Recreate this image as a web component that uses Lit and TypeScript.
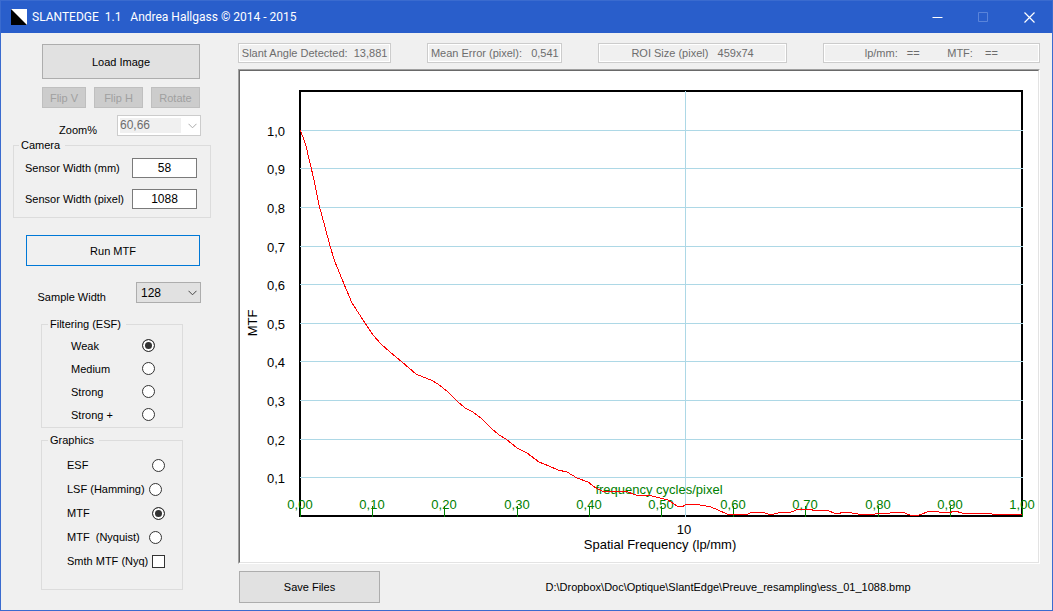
import { LitElement, html, svg, css } from "lit";
import { customElement, state } from "lit/decorators.js";

/* Plot geometry, in the chart's own units. */
const LEFT = 60;
const RIGHT = 782;
const TOP = 20;
const BOTTOM = 445;
const UNIT = 386;

const CURVE: [number, number][] = [
  [60, 59], [63, 66], [66, 75], [70, 92], [74, 109], [79, 134], [85, 156], [90, 175], [95, 191],
  [104, 213], [112, 232], [125, 252], [133, 264], [141, 273], [150, 281], [162, 291], [176, 303],
  [183, 306], [191, 309], [198, 313], [208, 321], [217, 330], [225, 337], [233, 341], [242, 348],
  [251, 357], [259, 364], [266, 368], [277, 377], [287, 382], [299, 391], [309, 395], [318, 399],
  [327, 401], [337, 407], [348, 411], [356, 417], [362, 420], [385, 420], [396, 424], [412, 425],
  [428, 429], [437, 435], [442, 436], [447, 433], [455, 433], [471, 436], [478, 439], [487, 443],
  [500, 443], [505, 444], [513, 441], [522, 441], [531, 444], [541, 441], [551, 441], [559, 438],
  [568, 438], [577, 440], [582, 439], [587, 439], [596, 443], [605, 441], [618, 443], [632, 444],
  [638, 442], [643, 443], [657, 441], [662, 441], [670, 444], [679, 444], [690, 440], [708, 442],
  [715, 440], [722, 442], [748, 442], [752, 443], [764, 443], [768, 444], [773, 443], [782, 443],
];

const comma = (n: number, digits: number) => n.toFixed(digits).replace(".", ",");

@customElement("mtf-chart")
export class MtfChart extends LitElement {
  static styles = css`
    :host {
      display: block;
      background: #fff;
      border: 1px solid;
      border-color: #a0a0a0 #fff #fff #a0a0a0;
    }
    .inner {
      border: 1px solid;
      border-color: #696969 #e3e3e3 #e3e3e3 #696969;
    }
    svg {
      display: block;
      width: 100%;
      height: auto;
      font-family: "Liberation Sans", Arial, sans-serif;
      font-size: 13px;
    }
    .grid { stroke: #add8e6; shape-rendering: crispEdges; }
    .frame { fill: none; stroke: #000; stroke-width: 2; shape-rendering: crispEdges; }
    .tick { stroke: #008000; shape-rendering: crispEdges; }
    .curve { fill: none; stroke: #f00; shape-rendering: crispEdges; }
    .value { text-anchor: end; }
    .mid { text-anchor: middle; }
    .green { fill: #008000; }
  `;

  render() {
    const levels = [1, 0.9, 0.8, 0.7, 0.6, 0.5, 0.4, 0.3, 0.2, 0.1];
    const ticks = Array.from({ length: 11 }, (_, i) => i / 10);
    const width = RIGHT - LEFT;
    const tenLp = Math.round(LEFT + (width * 10 * 58) / 1088) + 0.5;
    return html`<div class="inner">
      <svg viewBox="0 0 798 491" role="img" aria-label="MTF">
        <rect class="frame" x=${LEFT} y=${TOP} width=${width} height=${BOTTOM - TOP}></rect>
        ${levels.map((v) => {
          const y = Math.round(BOTTOM - 0.2 - v * UNIT);
          return svg`<line class="grid" x1=${LEFT} x2=${RIGHT + 1} y1=${y + 0.5} y2=${y + 0.5}></line>
            <text class="value" x="45" y=${y + 6}>${comma(v, 1)}</text>`;
        })}
        <line class="grid" x1=${tenLp} x2=${tenLp} y1=${TOP} y2=${BOTTOM + 1}></line>
        ${ticks.map((f) => {
          const x = Math.round(LEFT + f * width);
          return svg`<text class="mid green" x=${x} y="438">${comma(f, 2)}</text>
            <line class="tick" x1=${x + 0.5} x2=${x + 0.5} y1="435" y2="446"></line>`;
        })}
        <text class="mid green" x="419" y="423">frequency cycles/pixel</text>
        <polyline class="curve" points=${CURVE.map((p) => p.join(",")).join(" ")}></polyline>
        <text class="mid" x="444" y="463">10</text>
        <text class="mid" x="420" y="478">Spatial Frequency (lp/mm)</text>
        <text class="mid" transform="translate(17 252) rotate(-90)">MTF</text>
      </svg>
    </div>`;
  }
}

@customElement("app-root")
export class AppRoot extends LitElement {
  @state() private filtering = "Weak";
  @state() private graphics = "MTF";

  static styles = css`
    :host {
      display: flex;
      flex-direction: column;
      box-sizing: border-box;
      min-height: 100vh;
      border: 1px solid #3a6bcf;
      border-top: 0;
      background: #f0f0f0;
      color: #000;
      font: 11px/14px "Liberation Sans", Arial, sans-serif;
    }
    * { box-sizing: border-box; }
    button, input, select { font: inherit; color: inherit; margin: 0; border-radius: 0; }

    .titlebar {
      display: flex;
      align-items: center;
      height: 33px;
      padding-left: 10px;
      background: #295ecb;
      border-top: 1px solid #3a6bcf;
      color: #fff;
    }
    .logo { display: block; width: 16px; height: 16px; margin-right: 5px; }
    .title {
      flex: 1;
      margin: 0;
      font: 12px/16px Roboto, "Open Sans", sans-serif;
      white-space: pre;
    }
    .caption {
      display: grid;
      place-items: center;
      width: 46px;
      height: 32px;
      padding: 0;
      border: 0;
      background: none;
    }
    .caption svg { display: block; width: 11px; height: 11px; fill: none; stroke: #fff; }
    .caption:disabled svg { stroke: #5a84da; }

    .body { flex: 1; display: grid; grid-template-columns: 237px minmax(0, 1fr); }

    .side { padding: 11px 27px 10px 12px; display: flex; flex-direction: column; }
    .btn { padding: 0; border: 1px solid #adadad; background: #e1e1e1; text-align: center; }
    .btn:disabled { border-color: #bfbfbf; background: #ccc; color: #a0a0a0; }
    .load { height: 35px; margin: 0 11px 0 29px; }
    .transforms {
      display: grid;
      grid-template-columns: 44fr 49fr 49fr;
      gap: 8px;
      margin: 8px 11px 7px 29px;
    }
    .transforms .btn { height: 21px; }
    .pick { display: flex; align-items: flex-start; justify-content: flex-end; padding-right: 10px; }
    .pick label { padding-top: 8px; }
    .zoom { gap: 20px; }
    .sample { gap: 30px; }
    .combo { display: grid; align-items: center; }
    .combo select, .combo svg { grid-area: 1 / 1; }
    .combo svg {
      justify-self: end;
      width: 9px;
      height: 6px;
      margin-right: 4px;
      fill: none;
      stroke: #444;
      pointer-events: none;
    }
    select {
      appearance: none;
      height: 21px;
      padding: 0 0 0 4px;
      border: 1px solid #adadad;
      background: #e1e1e1;
      font-size: 12px;
    }
    .sample select { width: 65px; }
    .zoom select {
      width: 84px;
      padding: 0 0 1px 2px;
      border-color: #ccc;
      background: linear-gradient(#f0f0f0, #f0f0f0) 2px 2px / 61px 15px no-repeat #fff;
      color: #6d6d6d;
      opacity: 1;
    }
    .zoom .combo svg { stroke: #aaa; }

    fieldset { min-width: 0; margin: 0; border: 1px solid #dcdcdc; }
    legend { height: 14px; padding: 0 5px 0 2px; }
    .camera { margin: 1px 0 17px; padding: 6px 13px 8px 11px; display: grid; gap: 11px; }
    .camera legend { margin-left: -6px; }
    .entry { display: flex; align-items: center; justify-content: space-between; height: 20px; }
    .entry input {
      width: 65px;
      height: 20px;
      padding: 0;
      border: 1px solid #7a7a7a;
      background: #fff;
      text-align: center;
      font-size: 12px;
    }
    .run { height: 31px; margin: 0 11px 16px 13px; border-color: #0078d7; background: #f0f0f0; }
    .choices { margin: 13px 28px 0; padding: 3px 17px 0 25px; }
    .choices legend { margin-left: -19px; }
    .choice { display: flex; align-items: center; justify-content: space-between; }
    .filtering { padding: 3px 27px 1px 29px; }
    .filtering legend { margin-left: -23px; }
    .filtering .choice { height: 23px; }
    .graphics { margin-top: 5px; padding-bottom: 16px; padding-top: 6px; }
    .graphics .choice { height: 24px; white-space: pre; }
    .graphics .snug { padding-right: 3px; }
    .choice input {
      appearance: none;
      width: 13px;
      height: 13px;
      border: 1px solid #333;
      background: #fff;
      box-shadow: inset 0 0 0 2px #fff;
    }
    .choice input[type="radio"] { border-radius: 50%; }
    .choice input:checked { background: #333; }

    .main { padding: 10px 12px 7px 0; }
    .readouts { display: grid; grid-template-columns: 153fr 135fr 188fr 217fr; gap: 36px; }
    .readouts input {
      min-width: 0;
      width: 100%;
      height: 20px;
      padding: 0;
      border: 1px solid #ccc;
      background: #f0f0f0;
      box-shadow: inset 0 0 0 1px #fff;
      color: #6d6d6d;
      text-align: center;
    }
    mtf-chart { margin: 6px 0 7px; }
    .footer { display: flex; align-items: center; gap: 36px; }
    .save { width: 141px; height: 32px; margin-left: 1px; }
    .path { flex: 1; text-align: center; }
  `;

  private choice(group: string, label: string, current: string, pick: (v: string) => void, snug = false) {
    return html`<label class="choice ${snug ? "snug" : ""}"><span>${label}</span><input
        type="radio" name=${group} .checked=${label === current} @change=${() => pick(label)}></label>`;
  }

  private chevron() {
    return html`<svg viewBox="0 0 9 6" aria-hidden="true"><path d="M.5 .8 4.5 4.8 8.5 .8"></path></svg>`;
  }

  render() {
    const setFilter = (v: string) => { this.filtering = v; };
    const setGraph = (v: string) => { this.graphics = v; };
    return html`
      <header class="titlebar">
        <svg class="logo" viewBox="0 0 16 16" aria-hidden="true">
          <rect width="16" height="16" fill="#fff"></rect><path d="M0 0 16 16H0Z" fill="#000"></path>
        </svg>
        <h1 class="title">SLANTEDGE  1.1   Andrea Hallgass © 2014 - 2015</h1>
        <button class="caption" aria-label="Minimize"><svg viewBox="0 0 11 11"><path d="M.5 5.5H10.5"></path></svg></button>
        <button class="caption" aria-label="Maximize" disabled><svg viewBox="0 0 11 11"><path d="M.5 .5H9.5V9.5H.5Z"></path></svg></button>
        <button class="caption" aria-label="Close"><svg viewBox="0 0 11 11"><path d="M.5 .5 10.5 10.5M10.5 .5 .5 10.5" stroke-width="1.2"></path></svg></button>
      </header>
      <div class="body">
        <aside class="side">
          <button class="btn load">Load Image</button>
          <div class="transforms">
            <button class="btn" disabled>Flip V</button>
            <button class="btn" disabled>Flip H</button>
            <button class="btn" disabled>Rotate</button>
          </div>
          <div class="pick zoom">
            <label for="zoom">Zoom%</label>
            <div class="combo"><select id="zoom" disabled><option>60,66</option></select>${this.chevron()}</div>
          </div>
          <fieldset class="camera">
            <legend>Camera</legend>
            <div class="entry"><label for="mm">Sensor Width (mm)</label><input id="mm" type="text" value="58"></div>
            <div class="entry"><label for="px">Sensor Width (pixel)</label><input id="px" type="text" value="1088"></div>
          </fieldset>
          <button class="btn run">Run MTF</button>
          <div class="pick sample">
            <label for="sample">Sample Width</label>
            <div class="combo"><select id="sample"><option>128</option></select>${this.chevron()}</div>
          </div>
          <fieldset class="choices filtering">
            <legend>Filtering (ESF)</legend>
            ${["Weak", "Medium", "Strong", "Strong +"].map((v) => this.choice("filter", v, this.filtering, setFilter))}
          </fieldset>
          <fieldset class="choices graphics">
            <legend>Graphics</legend>
            ${["ESF", "LSF (Hamming)", "MTF", "MTF  (Nyquist)"].map((v) =>
              this.choice("graph", v, this.graphics, setGraph, v.includes("(")))}
            <label class="choice"><span>Smth MTF (Nyq)</span><input type="checkbox"></label>
          </fieldset>
        </aside>
        <main class="main">
          <div class="readouts">
            <input disabled aria-label="Slant angle" value="Slant Angle Detected:  13,881">
            <input disabled aria-label="Mean error" value="Mean Error (pixel):   0,541">
            <input disabled aria-label="ROI size" value="ROI Size (pixel)   459x74">
            <input disabled aria-label="Cursor" value="lp/mm:   ==         MTF:    ==">
          </div>
          <mtf-chart></mtf-chart>
          <div class="footer">
            <button class="btn save">Save Files</button>
            <span class="path">D:\\Dropbox\\Doc\\Optique\\SlantEdge\\Preuve_resampling\\ess_01_1088.bmp</span>
          </div>
        </main>
      </div>
    `;
  }
}
